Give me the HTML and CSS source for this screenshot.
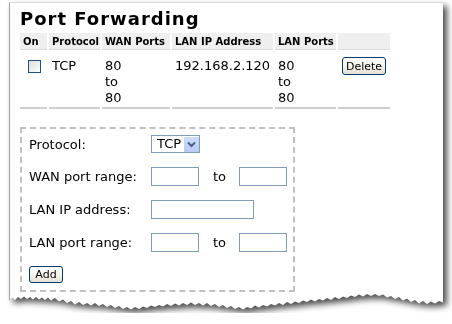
FILE: index.html
```html
<!DOCTYPE html>
<html lang="en">
<head>
    <meta charset="UTF-8">
    <meta name="viewport" content="width=device-width, initial-scale=1.0">
    <title>Port Forwarding</title>
    <link rel="stylesheet" href="styles.css">
</head>
<body>

<div class="page">
    <div class="sheet">
        <h1 class="title">Port Forwarding</h1>
        <table class="rules">
            <thead>
                <tr>
                    <th class="col-on">On</th>
                    <th class="col-proto">Protocol</th>
                    <th class="col-wan">WAN Ports</th>
                    <th class="col-ip">LAN IP Address</th>
                    <th class="col-lan">LAN Ports</th>
                    <th class="col-act"></th>
                </tr>
            </thead>
            <tbody>
                <tr>
                    <td><input type="checkbox" class="checkbox"></td>
                    <td>TCP</td>
                    <td>80<br>to<br>80</td>
                    <td>192.168.2.120</td>
                    <td>80<br>to<br>80</td>
                    <td><button type="button" class="btn btn-delete">Delete</button></td>
                </tr>
            </tbody>
        </table>

        <form class="add-form">
            <div class="form-row">
                <label class="form-label">Protocol:</label>
                <div class="select">
                    <span class="select-value">TCP</span>
                    <span class="select-arrow">
                        <svg width="15" height="15" viewBox="0 0 15 15"><path d="M4 5.5 L7.5 9 L11 5.5" fill="none" stroke="#4d6185" stroke-width="2"/></svg>
                    </span>
                </div>
            </div>
            <div class="form-row">
                <label class="form-label">WAN port range:</label>
                <input type="text" class="field">
                <span class="to">to</span>
                <input type="text" class="field">
            </div>
            <div class="form-row">
                <label class="form-label">LAN IP address:</label>
                <input type="text" class="field field-wide">
            </div>
            <div class="form-row">
                <label class="form-label">LAN port range:</label>
                <input type="text" class="field">
                <span class="to">to</span>
                <input type="text" class="field">
            </div>
            <div class="form-row">
                <button type="button" class="btn btn-add">Add</button>
            </div>
        </form>
    </div>
    <svg class="tear" width="434" height="20" viewBox="0 0 434 20">
        <polygon fill="#fff" points="0,0 0,7 3,4.5 6,7 9,4 12,6 15,3.5 18,6 21,4 24,6.5 27,4 30,6.5 33,4.5 36,7 39,4.5 42,7.5 46,5 50,8.5 54,6.5 58,10 62,8 66,11.5 70,9 74,12 78,10 82,12.5 86,10 90,13 94,11 98,14 102,12 106,15 110,13 114,16 118,14 122,16.5 126,14 130,16 134,13.5 138,15 142,12.5 146,14 150,12 154,13.5 158,11 162,13 166,10.5 170,12.5 174,10 178,12 182,9.5 186,12 190,10 194,12.5 198,10 202,13 206,11 210,14 214,12 218,15 222,13 226,16 230,14 234,16.5 238,14 242,15.5 246,12.5 250,14.5 254,12 258,13.5 262,11 266,12.5 270,10 274,12 278,9 282,11 286,8.5 290,10 294,7.5 298,9 302,6.5 306,8.5 310,6 314,7.5 318,5 322,7 326,4 330,6 334,3.5 338,5 342,2.5 346,4 350,1.5 354,3.5 358,1 362,3 366,1 370,3 374,1.5 378,4.5 382,3 386,6 390,4 394,7.5 398,5.5 402,9 406,7 410,10.5 414,8 418,11 422,8.5 426,10.5 430,8 434,9.5 434,0"/>
        <line x1="0.5" y1="0" x2="0.5" y2="7" stroke="#a0a0a0"/>
    </svg>
</div>

</body>
</html>
```

FILE: styles.css
```css
body {
    margin: 0;
    background: #fff;
    font-family: "DejaVu Sans", Verdana, sans-serif;
    font-size: 13px;
    color: #000;
}
.page {
    width: 434px;
    margin: 2px 0 0 9px;
    filter: drop-shadow(4px 4px 3px rgba(0, 0, 0, 0.7));
}
.sheet {
    background: #fff;
    border-left: 1px solid #a0a0a0;
    border-top: 1px solid #dcdcdc;
    padding: 5px 0 1px 10px;
}
.title {
    margin: 0 0 1px;
    font-size: 18px;
    line-height: 22px;
    letter-spacing: 1px;
    font-weight: bold;
}
.tear {
    display: block;
}

/* rule table */
.rules {
    margin-left: -2px;
    width: 374px;
    table-layout: fixed;
    border-spacing: 2px;
}
.rules th, .rules td {
    box-sizing: border-box;
    text-align: left;
    vertical-align: top;
}
.rules th {
    background: #efefef;
    font-size: 10px;
    line-height: 13px;
    padding: 2px 0 1px 3px;
    white-space: nowrap;
    overflow: hidden;
    border-bottom: 1px solid #dadada;
}
.rules td {
    padding: 6px 3px 1px;
    line-height: 16px;
    border-bottom: 2px solid #d0d0d0;
}
.col-on { width: 27px; }
.col-proto { width: 51px; }
.col-wan { width: 68px; }
.col-ip { width: 101px; }
.col-lan { width: 61px; }
.col-act { width: 52px; }

.checkbox {
    appearance: none;
    display: block;
    width: 13px;
    height: 13px;
    margin: 2px 0 0 5px;
    border: 1px solid #1c5180;
    background: linear-gradient(135deg, #dcdcd7, #fff);
    box-sizing: border-box;
}
.btn {
    font-family: "DejaVu Sans", Verdana, sans-serif;
    font-size: 11px;
    color: #000;
    border: 1px solid #003c74;
    border-radius: 3px;
    background: linear-gradient(#fff, #f2f1ea 60%, #e3e0d2);
    padding: 0;
    box-sizing: border-box;
}
.btn-delete {
    display: block;
    width: 44px;
    height: 18px;
    margin: -1px 0 0 1px;
}
.btn-add {
    width: 34px;
    height: 17px;
}

/* add form */
.add-form {
    box-sizing: border-box;
    width: 275px;
    margin: 16px 0 0;
    border: 2px dashed #c0c0c0;
    padding: 6px 6px 7px 7px;
    display: flex;
    flex-direction: column;
    gap: 14px;
}
.form-row {
    display: flex;
    align-items: center;
}
.form-label {
    width: 122px;
    flex: none;
}
.select {
    box-sizing: border-box;
    width: 49px;
    height: 18px;
    border: 1px solid #7f9db9;
    display: flex;
    align-items: center;
}
.select-value {
    padding-left: 5px;
    line-height: 16px;
}
.select-arrow {
    margin-left: auto;
    width: 15px;
    height: 15px;
    background: linear-gradient(#cfdcfd, #b7cbf7);
}
.select-arrow svg {
    display: block;
}
.field {
    box-sizing: border-box;
    width: 48px;
    height: 19px;
    margin: 0;
    padding: 0;
    border: 1px solid #7f9db9;
    background: #fff;
}
.field-wide {
    width: 103px;
}
.to {
    margin: 0 13px 0 14px;
}
```
